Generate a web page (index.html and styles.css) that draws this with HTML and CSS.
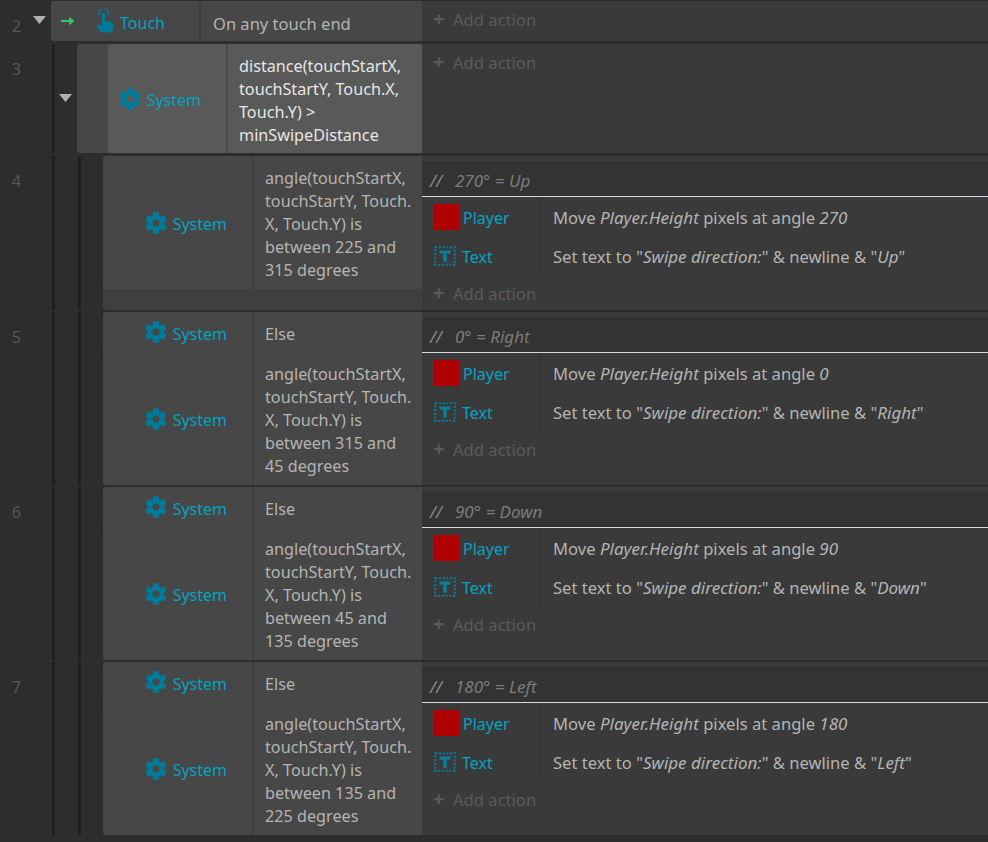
FILE: index.html
```html
<!DOCTYPE html>
<html lang="en">
<head>
<meta charset="utf-8">
<title>Event sheet</title>
<link rel="stylesheet" href="styles.css">
</head>
<body>
<svg class="defs" width="0" height="0" aria-hidden="true">
  <symbol id="gear" viewBox="0 0 22 22">
    <circle cx="11" cy="11" r="5.800" fill="none" stroke="currentColor" stroke-width="4.600"/>
    <g fill="currentColor">
      <rect x="8" y="0.200" width="6" height="4.400" rx="0.800"/>
      <rect x="8" y="17.400" width="6" height="4.400" rx="0.800"/>
      <rect x="8" y="0.200" width="6" height="4.400" rx="0.800" transform="rotate(60 11 11)"/>
      <rect x="8" y="0.200" width="6" height="4.400" rx="0.800" transform="rotate(120 11 11)"/>
      <rect x="8" y="0.200" width="6" height="4.400" rx="0.800" transform="rotate(240 11 11)"/>
      <rect x="8" y="0.200" width="6" height="4.400" rx="0.800" transform="rotate(300 11 11)"/>
    </g>
  </symbol>
  <symbol id="texticon" viewBox="0 0 22 20">
    <rect x="1.200" y="1.200" width="19.600" height="17.600" fill="none" stroke="currentColor" stroke-width="2" stroke-dasharray="2 1.700"/>
    <path d="M5.500 4.500h11v3.200h-3.700v8h-3.600v-8H5.500z" fill="currentColor"/>
  </symbol>
  <symbol id="twist" viewBox="0 0 13 8"><path d="M0 0h13L6.500 8z" fill="currentColor"/></symbol>
</svg>

<main class="sheet">

  <section class="row row-first">
    <div class="num">2</div>
    <div class="twist-col twist-top"><svg class="twist"><use href="#twist"/></svg></div>
    <div class="conds block-top">
      <div class="cond cond-touch">
        <div class="obj obj-touch">
          <svg class="arrow" viewBox="0 0 14 10"><path d="M0 4h8V.8L13.500 5 8 9.200V6H0z" fill="#2ecc5e"/></svg>
          <svg class="touch" viewBox="0 0 18 24"><path d="M3.400 6.500a4.700 4.700 0 1 1 8.400 0" fill="none" stroke="currentColor" stroke-width="1.500"/><path d="M6 5.200a1.700 1.700 0 0 1 3.400 0v6.600l5.600 1.500c1.500.4 2.400 1.300 2.400 2.800v2.900c0 2.500-1.700 4.500-4.200 4.500H6.500c-1.400 0-2.500-.8-3.300-2L.6 17.500c-.4-.9 0-1.900 1-2.100 1-.1 3 .6 4.400 1.400z" fill="currentColor"/></svg>
          <span class="name">Touch</span>
        </div>
        <div class="txt">On any touch end</div>
      </div>
    </div>
    <div class="actions actions-short"><div class="add">Add action</div></div>
  </section>

  <section class="row row-wide">
    <div class="num">3</div>
    <div class="line"></div>
    <div class="twist-col twist-mid"><svg class="twist"><use href="#twist"/></svg></div>
    <div class="conds conds-sel">
      <div class="cond cond-sel">
        <div class="obj obj-sel"><svg class="gear"><use href="#gear"/></svg><span class="name">System</span></div>
        <div class="txt txt-sel">distance(touchStartX,<br>touchStartY, Touch.X,<br>Touch.Y) &gt;<br>minSwipeDistance</div>
      </div>
    </div>
    <div class="actions actions-short"><div class="add">Add action</div></div>
  </section>

  <section class="row row-wide">
    <div class="num">4</div>
    <div class="line"></div><div class="line line2"></div>
    <div class="conds conds-sub">
      <div class="cond cond-one">
        <div class="obj"><svg class="gear"><use href="#gear"/></svg><span class="name">System</span></div>
        <div class="txt">angle(touchStartX,<br>touchStartY, Touch.<br>X, Touch.Y) is<br>between 225 and<br>315 degrees</div>
      </div>
    </div>
    <div class="actions">
      <div class="comment"><b>//</b><span>270° = Up</span></div>
      <div class="act"><div class="aobj"><i class="player"></i><span class="name">Player</span></div><div class="atxt">Move <em>Player.Height</em> pixels at angle <em>270</em></div></div>
      <div class="act"><div class="aobj"><svg class="ticon"><use href="#texticon"/></svg><span class="name">Text</span></div><div class="atxt">Set text to "<em>Swipe direction:</em>" &amp; newline &amp; "<em>Up</em>"</div></div>
      <div class="add">Add action</div>
    </div>
  </section>

  <section class="row">
    <div class="num">5</div>
    <div class="line"></div><div class="line line2"></div>
    <div class="conds conds-sub">
      <div class="cond cond-else">
        <div class="obj"><svg class="gear"><use href="#gear"/></svg><span class="name">System</span></div>
        <div class="txt">Else</div>
      </div>
      <div class="cond cond-two">
        <div class="obj"><svg class="gear"><use href="#gear"/></svg><span class="name">System</span></div>
        <div class="txt">angle(touchStartX,<br>touchStartY, Touch.<br>X, Touch.Y) is<br>between 315 and<br>45 degrees</div>
      </div>
    </div>
    <div class="actions">
      <div class="comment"><b>//</b><span>0° = Right</span></div>
      <div class="act"><div class="aobj"><i class="player"></i><span class="name">Player</span></div><div class="atxt">Move <em>Player.Height</em> pixels at angle <em>0</em></div></div>
      <div class="act"><div class="aobj"><svg class="ticon"><use href="#texticon"/></svg><span class="name">Text</span></div><div class="atxt">Set text to "<em>Swipe direction:</em>" &amp; newline &amp; "<em>Right</em>"</div></div>
      <div class="add">Add action</div>
    </div>
  </section>

  <section class="row">
    <div class="num">6</div>
    <div class="line"></div><div class="line line2"></div>
    <div class="conds conds-sub">
      <div class="cond cond-else">
        <div class="obj"><svg class="gear"><use href="#gear"/></svg><span class="name">System</span></div>
        <div class="txt">Else</div>
      </div>
      <div class="cond cond-two">
        <div class="obj"><svg class="gear"><use href="#gear"/></svg><span class="name">System</span></div>
        <div class="txt">angle(touchStartX,<br>touchStartY, Touch.<br>X, Touch.Y) is<br>between 45 and<br>135 degrees</div>
      </div>
    </div>
    <div class="actions">
      <div class="comment"><b>//</b><span>90° = Down</span></div>
      <div class="act"><div class="aobj"><i class="player"></i><span class="name">Player</span></div><div class="atxt">Move <em>Player.Height</em> pixels at angle <em>90</em></div></div>
      <div class="act"><div class="aobj"><svg class="ticon"><use href="#texticon"/></svg><span class="name">Text</span></div><div class="atxt">Set text to "<em>Swipe direction:</em>" &amp; newline &amp; "<em>Down</em>"</div></div>
      <div class="add">Add action</div>
    </div>
  </section>

  <section class="row">
    <div class="num">7</div>
    <div class="line"></div><div class="line line2"></div>
    <div class="conds conds-sub">
      <div class="cond cond-else">
        <div class="obj"><svg class="gear"><use href="#gear"/></svg><span class="name">System</span></div>
        <div class="txt">Else</div>
      </div>
      <div class="cond cond-two">
        <div class="obj"><svg class="gear"><use href="#gear"/></svg><span class="name">System</span></div>
        <div class="txt">angle(touchStartX,<br>touchStartY, Touch.<br>X, Touch.Y) is<br>between 135 and<br>225 degrees</div>
      </div>
    </div>
    <div class="actions">
      <div class="comment"><b>//</b><span>180° = Left</span></div>
      <div class="act"><div class="aobj"><i class="player"></i><span class="name">Player</span></div><div class="atxt">Move <em>Player.Height</em> pixels at angle <em>180</em></div></div>
      <div class="act"><div class="aobj"><svg class="ticon"><use href="#texticon"/></svg><span class="name">Text</span></div><div class="atxt">Set text to "<em>Swipe direction:</em>" &amp; newline &amp; "<em>Left</em>"</div></div>
      <div class="add">Add action</div>
    </div>
  </section>

</main>
</body>
</html>
```

FILE: styles.css
```css
* { box-sizing: border-box; }
html, body { margin: 0; height: 100%; overflow: hidden; }
body {
  background: #2d2d2d;
  font-family: "Noto Sans", "Open Sans", sans-serif;
  font-size: 16.2px;
  line-height: 23px;
  color: #b4b4b4;
}
.defs { position: absolute; }
.sheet { width: 988px; padding-top: 1px; }

.row {
  position: relative;
  display: flex;
  align-items: stretch;
  padding-top: 2px;
}
.row-first { padding-top: 0; }
.row-wide { padding-top: 3px; }

.num {
  width: 51px;
  flex: none;
  padding: 14px 18px 0 0;
  text-align: center;
  color: #565656;
}

.line { width: 3px; margin-left: 1px; background: #1f1f1f; flex: none; }
.line2 { margin-left: 23px; }

.twist-col { display: flex; color: #b0b0b0; }
.twist { width: 13px; height: 8px; display: block; }
.twist-top { position: absolute; left: 33px; top: 15px; }
.twist-mid { width: 22px; padding: 50px 0 0 4px; flex: none; }

.conds { width: 345px; display: flex; flex-direction: column; border-radius: 3px 0 0 3px; background: #474747; flex: none; }
.block-top { width: 371px; }
.conds-sel { padding-left: 31px; }
.conds-sub { width: 319px; margin-left: 22px; background: #3f3f3f; overflow: hidden; }

.cond { display: flex; background: #474747; border-radius: 3px 0 0 3px; }
.cond-touch { height: 40px; }
.cond-sel { height: 109px; background: #595959; }
.cond-one { height: 133px; margin-bottom: 21px; }
.cond-else { height: 42px; }
.cond-two { height: 131px; }

.obj {
  width: 151px;
  flex: none;
  display: flex;
  align-items: center;
  justify-content: flex-end;
  gap: 6px;
  padding: 3px 25px 0 0;
  border-right: 2px solid #3e3e3e;
}
.cond-else .obj { align-items: flex-start; padding-top: 11px; margin-bottom: 2px; }
.cond-else .gear { margin-top: -2px; }
.cond-two .obj { padding-top: 1px; }
.obj-touch { width: 150px; padding: 5px 34px 0 0; position: relative; }
.obj-sel { width: 120px; border-right-color: #4a4a4a; }

.name { color: #00a3c2; white-space: nowrap; font-size: 16px; }
.gear { width: 22px; height: 22px; color: #007a99; flex: none; margin-top: -3px; }
.arrow { position: absolute; left: 10px; top: 15px; width: 14px; height: 10px; }
.touch { width: 18px; height: 24px; color: #007a99; margin-top: -5px; }

.txt {
  padding: 10px 0 0 11px;
  white-space: nowrap;
  flex: 1;
}
.cond-touch .txt { padding: 11px 0 0 12px; font-size: 16.500px; }
.cond-two .txt { padding-top: 9px; }
.cond-sel .txt { padding-top: 11px; }
.cond-one .txt { padding-top: 11px; }
.cond-else .txt { padding-top: 11px; }
.txt-sel { color: #e6e6e6; }

.actions {
  flex: 1;
  background: #3a3a3a;
  padding-top: 5px;
  min-width: 0;
}
.actions-short { padding-top: 0; }

.comment {
  height: 36px;
  background: #333;
  border-bottom: 1px solid #d8d8e8;
  color: #7c7c7c;
  font-size: 17px;
  font-style: italic;
  display: flex;
  align-items: center;
  padding: 3px 0 0 8px;
  border-radius: 3px 0 0 0;
}
.comment b { font-weight: 400; width: 25px; color: #8a8a8a; }

.act { display: flex; height: 39px; }
.aobj {
  width: 119px;
  flex: none;
  display: flex;
  align-items: center;
  padding: 4px 0 0 12px;
  gap: 3px;
  border-right: 1px solid #333;
}
.player { width: 26px; height: 26px; background: #b00000; flex: none; display: block; margin-top: -3px; }
.ticon { width: 22px; height: 20px; color: #0a7d99; flex: none; margin: -3px 3px 0 0; }
.atxt { padding: 9px 0 0 12px; white-space: nowrap; font-size: 16.600px; }
.atxt em { font-style: italic; font-size: 17px; }

.add {
  height: 34px;
  line-height: 34px;
  padding: 2px 0 0 31px;
  color: #5a5a5a;
  position: relative;
  font-size: 16.600px;
}
.add::before {
  content: "+";
  position: absolute;
  left: 11px;
  top: 1px;
  font-weight: 700;
  font-size: 20px;
}
.actions-short .add { height: 38px; padding-top: 2px; }
```
